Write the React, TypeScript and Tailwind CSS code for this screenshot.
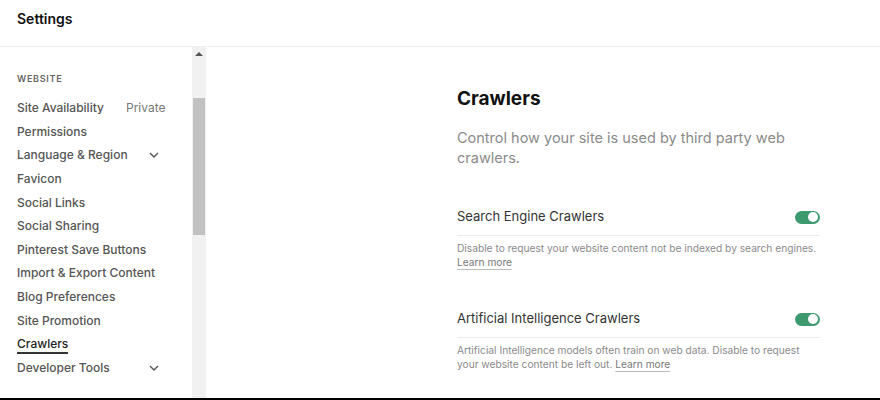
import React from "react";

const navItems = [
  { label: "Site Availability", extra: "Private" },
  { label: "Permissions" },
  { label: "Language & Region", chevron: true },
  { label: "Favicon" },
  { label: "Social Links" },
  { label: "Social Sharing" },
  { label: "Pinterest Save Buttons" },
  { label: "Import & Export Content" },
  { label: "Blog Preferences" },
  { label: "Site Promotion" },
  { label: "Crawlers", active: true },
  { label: "Developer Tools", chevron: true },
];

function Chevron() {
  return (
    <svg width="10" height="6" viewBox="0 0 10 6" fill="none">
      <path d="M1 1l4 4 4-4" stroke="#555" strokeWidth="1.4" />
    </svg>
  );
}

function Toggle() {
  return (
    <div className="flex h-[13px] w-[25px] items-center justify-end rounded-full bg-[#3d9a6e] pr-[2px]">
      <div className="h-[10px] w-[10px] rounded-full bg-white" />
    </div>
  );
}

function Setting({ title, children }: { title: string; children: React.ReactNode }) {
  return (
    <div>
      <div className="flex h-[36px] items-center justify-between border-b border-[#ececec]">
        <span className="text-[13px] text-[#333]">{title}</span>
        <Toggle />
      </div>
      <p className="pt-[5px] text-[10.2px] leading-[14px] text-[#8a8a8a]">{children}</p>
    </div>
  );
}

function LearnMore() {
  return <a className="text-[#777] underline decoration-[#bbb] underline-offset-[3px]">Learn more</a>;
}

export default function App() {
  return (
    <div
      className="flex h-[400px] w-[880px] flex-col overflow-hidden border-b-2 border-black bg-white"
      style={{ fontFamily: "Inter, 'Liberation Sans', sans-serif" }}
    >
      <div className="flex h-[47px] flex-none items-start border-b border-[#efefef] pl-[17px] pt-[8px]">
        <h1 className="text-[14px] font-semibold text-[#111]">Settings</h1>
      </div>

      <div className="flex min-h-0 flex-1">
        <div className="w-[192px] flex-none pl-[17px] pt-[25px]">
          <div className="text-[9px] font-semibold tracking-[0.08em] text-[#666]">WEBSITE</div>
          <ul className="mt-[11px]">
            {navItems.map((item) => (
              <li
                key={item.label}
                className={`flex h-[23.6px] items-center whitespace-nowrap text-[12px] font-medium ${
                  item.active ? "text-[#222]" : "text-[#555]"
                }`}
              >
                <span className="w-[109px] flex-none">
                  <span className={item.active ? "border-b-2 border-[#333] pb-[1px]" : ""}>{item.label}</span>
                </span>
                {item.extra && <span className="font-normal text-[#777]">{item.extra}</span>}
                {item.chevron && (
                  <span className="ml-[23px] flex">
                    <Chevron />
                  </span>
                )}
              </li>
            ))}
          </ul>
        </div>

        <div className="flex w-[14px] flex-none flex-col items-center bg-[#f1f1f1]">
          <div className="mt-[5px] h-0 w-0 border-x-[4px] border-b-[4px] border-x-transparent border-b-[#555]" />
          <div className="mt-[42px] h-[137px] w-[12px] bg-[#c1c1c1]" />
        </div>

        <div className="flex-1 pl-[251px] pr-[60px] pt-[38px]">
          <h2 className="text-[19px] font-bold text-[#111]">Crawlers</h2>
          <p className="mt-[14px] w-[345px] text-[14.5px] leading-[20px] text-[#8a8a8a]">
            Control how your site is used by third party web crawlers.
          </p>
          <div className="mt-[32px]">
            <Setting title="Search Engine Crawlers">
              Disable to request your website content not be indexed by search engines. <LearnMore />
            </Setting>
          </div>
          <div className="mt-[33px]">
            <Setting title="Artificial Intelligence Crawlers">
              Artificial Intelligence models often train on web data. Disable to request your website content be
              left out. <LearnMore />
            </Setting>
          </div>
        </div>
      </div>
    </div>
  );
}
